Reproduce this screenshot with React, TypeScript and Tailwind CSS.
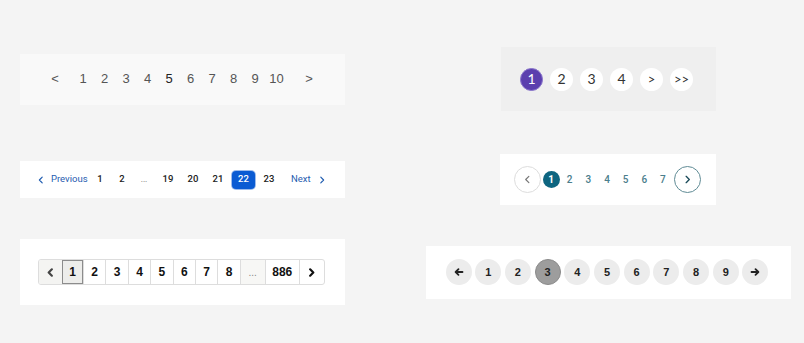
import React from "react";

const Chev = ({ dir, size = 8, sw = 1.5, color = "currentColor" }: { dir: "l" | "r"; size?: number; sw?: number; color?: string }) => (
  <svg width={size} height={size} viewBox="0 0 10 10" fill="none" stroke={color} strokeWidth={sw} strokeLinecap="round" strokeLinejoin="round">
    {dir === "l" ? <path d="M6.5 1.5 L3 5 L6.5 8.5" /> : <path d="M3.5 1.5 L7 5 L3.5 8.5" />}
  </svg>
);

const Arrow = ({ dir }: { dir: "l" | "r" }) => (
  <svg width="10" height="10" viewBox="0 0 10 10" fill="none" stroke="#222" strokeWidth={1.8} strokeLinecap="round" strokeLinejoin="round">
    {dir === "l" ? <path d="M8.5 5 H1.8 M4.5 2.2 L1.6 5 L4.5 7.8" /> : <path d="M1.5 5 H8.2 M5.5 2.2 L8.4 5 L5.5 7.8" />}
  </svg>
);

function P1() {
  const nums = [1, 2, 3, 4, 5, 6, 7, 8, 9, 10];
  return (
    <div className="w-[325px] h-[51px] bg-[#f9f9f9] flex items-center pl-[24.25px] text-[13px] text-[#555]" style={{ fontFamily: '"Liberation Sans", Arial, sans-serif' }}>
      <span className="w-[21.5px] text-center mr-[6.5px]">&lt;</span>
      {nums.map((n) => (
        <span key={n} className={`w-[21.5px] text-center ${n === 5 ? "text-[#222]" : ""}`}>{n}</span>
      ))}
      <span className="w-[21.5px] text-center ml-[11px]">&gt;</span>
    </div>
  );
}

function P2() {
  const items = ["1", "2", "3", "4", ">", ">>"];
  return (
    <div className="w-[215px] h-[64px] bg-[#efefef] flex items-center pl-[19.5px] gap-[7px] text-[14px] text-[#333]" style={{ fontFamily: 'Lato, "Open Sans", sans-serif' }}>
      {items.map((t, i) => (
        <span
          key={t}
          className={`w-[23px] h-[23px] rounded-full flex items-center justify-center leading-none ${i === 0 ? "bg-[#5b3fae] text-white border border-[#8a76cc]" : "bg-white"} ${i >= 4 ? "text-[13px]" : ""}`}
        >
          {t}
        </span>
      ))}
    </div>
  );
}

function P3() {
  return (
    <div className="w-[325px] h-[37px] bg-white flex items-center pl-[17px] text-[9.5px] font-medium text-[#222]" style={{ fontFamily: 'Roboto, "Liberation Sans", sans-serif' }}>
      <span className="flex items-center text-[#1f5cb0] gap-[6px] w-[52px] font-normal">
        <Chev dir="l" size={8} sw={1.5} />
        <span>Previous</span>
      </span>
      <span className="w-[22px] text-center">1</span>
      <span className="w-[22px] text-center">2</span>
      <span className="w-[22px] text-center text-[#777] text-[8px]">...</span>
      <span className="w-[24px] text-center ml-[1px]">19</span>
      <span className="w-[24px] text-center ml-[1px]">20</span>
      <span className="w-[24px] text-center ml-[1px]">21</span>
      <span className="w-[23px] h-[18px] ml-[2px] rounded-[4px] bg-[#0a5bd3] text-white flex items-center justify-center ring-1 ring-[#9dbcec]">22</span>
      <span className="w-[26px] text-center ml-[1px]">23</span>
      <span className="flex items-center text-[#1f5cb0] gap-[7px] ml-[9px] font-normal">
        <span>Next</span>
        <Chev dir="r" size={8} sw={1.5} />
      </span>
    </div>
  );
}

function P4() {
  const nums = [2, 3, 4, 5, 6, 7];
  return (
    <div className="w-[216px] h-[51px] bg-white flex items-center pl-[13.5px] text-[10px] font-medium text-[#4b7e8c]" style={{ fontFamily: 'Roboto, "Noto Sans", sans-serif' }}>
      <span className="w-[27px] h-[27px] rounded-full border border-[#dddddd] flex items-center justify-center text-[#777]">
        <Chev dir="l" size={9} sw={1.3} />
      </span>
      <span className="w-[18.67px] flex justify-center ml-[1.2px]">
        <span className="w-[17px] h-[17px] rounded-full bg-[#0e6580] text-white font-bold flex items-center justify-center">1</span>
      </span>
      {nums.map((n) => (
        <span key={n} className="w-[18.67px] text-center">{n}</span>
      ))}
      <span className="w-[27px] h-[27px] ml-[2.2px] rounded-full border border-[#5f8b95] flex items-center justify-center text-[#1b4b5a]">
        <Chev dir="r" size={9} sw={1.5} />
      </span>
    </div>
  );
}

function P5() {
  const cell = "h-full flex items-center justify-center border-l border-[#dddddd]";
  return (
    <div className="w-[325px] h-[66px] bg-white flex items-center pl-[18px] text-[12px] font-bold text-[#111]" style={{ fontFamily: '"Liberation Sans", Arial, sans-serif' }}>
      <div className="h-[26px] flex border border-[#dddddd] rounded-[3px] overflow-hidden">
        <span className="w-[23px] h-full flex items-center justify-center bg-[#f4f4f2] text-[#444]"><Chev dir="l" size={9} sw={2.4} /></span>
        <span className="w-[21px] h-full flex items-center justify-center bg-[#ededeb] border border-[#8c8c8c]">1</span>
        {[2, 3, 4, 5, 6, 7].map((n) => (
          <span key={n} className={`w-[22.4px] ${cell}`}>{n}</span>
        ))}
        <span className={`w-[22.4px] ${cell}`}>8</span>
        <span className={`w-[25px] ${cell} bg-[#f7f7f5] text-[#888] font-normal text-[10px]`}>...</span>
        <span className={`w-[34px] ${cell}`}>886</span>
        <span className={`w-[25px] ${cell}`}><Chev dir="r" size={9} sw={2.4} /></span>
      </div>
    </div>
  );
}

function P6() {
  const items: (number | "l" | "r")[] = ["l", 1, 2, 3, 4, 5, 6, 7, 8, 9, "r"];
  return (
    <div className="w-[365px] h-[53px] bg-white flex items-center pl-[20px] gap-[3.7px] text-[11px] font-bold text-[#222]" style={{ fontFamily: '"Liberation Sans", Arial, sans-serif' }}>
      {items.map((t) => (
        <span
          key={String(t)}
          className={`w-[26px] h-[26px] rounded-full flex items-center justify-center ${t === 3 ? "bg-[#9d9d9d] border border-[#8a8a8a]" : "bg-[#ececec]"}`}
        >
          {t === "l" ? <Arrow dir="l" /> : t === "r" ? <Arrow dir="r" /> : t}
        </span>
      ))}
    </div>
  );
}

function Row({ h, className, left, right }: { h: string; className?: string; left: React.ReactNode; right: React.ReactNode }) {
  return (
    <div className={`grid grid-cols-[325px_392px] gap-x-[67px] ${h} ${className ?? ""}`}>
      <div className="flex items-center">{left}</div>
      <div className="flex items-center justify-center">{right}</div>
    </div>
  );
}

export default function App() {
  return (
    <div className="w-[804px] h-[343px] bg-[#f4f4f4] pl-[20px] pt-[47px] flex flex-col">
      <Row h="h-[64px]" left={<P1 />} right={<P2 />} />
      <Row h="h-[51px]" className="mt-[43px]" left={<P3 />} right={<P4 />} />
      <Row h="h-[66px]" className="mt-[34px]" left={<P5 />} right={<P6 />} />
    </div>
  );
}
